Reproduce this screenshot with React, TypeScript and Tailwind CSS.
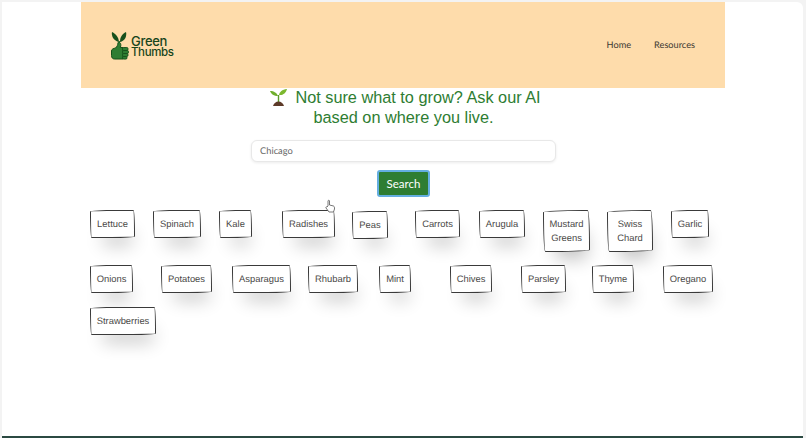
const ROW_ONE = [
  { label: 'Lettuce', size: 'w-[45px] h-[28px]' },
  { label: 'Spinach', size: 'w-[48px] h-[28px]' },
  { label: 'Kale', size: 'w-[33px] h-[28px]' },
  { label: 'Radishes', size: 'w-[53px] h-[28px]' },
  { label: 'Peas', size: 'w-[36px] h-[28px] mt-px' },
  { label: 'Carrots', size: 'w-[45px] h-[28px]' },
  { label: 'Arugula', size: 'w-[46px] h-[28px]' },
  { label: 'Mustard Greens', size: 'w-[47px] h-[42px]' },
  { label: 'Swiss Chard', size: 'w-[46px] h-[42px]' },
  { label: 'Garlic', size: 'w-[38px] h-[28px]' },
]

const ROW_TWO = [
  { label: 'Onions', size: 'w-[43px] h-[28px]' },
  { label: 'Potatoes', size: 'w-[51px] h-[28px]' },
  { label: 'Asparagus', size: 'w-[59px] h-[28px]' },
  { label: 'Rhubarb', size: 'w-[50px] h-[28px]' },
  { label: 'Mint', size: 'w-[32px] h-[28px]' },
  { label: 'Chives', size: 'w-[42px] h-[28px]' },
  { label: 'Parsley', size: 'w-[45px] h-[28px]' },
  { label: 'Thyme', size: 'w-[42px] h-[28px]' },
  { label: 'Oregano', size: 'w-[50px] h-[28px]' },
]

function Chip({ label, size }: { label: string; size: string }) {
  return (
    <div
      className={`${size} flex items-center justify-center rounded-[255px_15px_225px_15px/15px_225px_15px_255px] border-[1.5px] border-[#3a3a3a] bg-white px-[6px] text-center text-[9.4px] leading-[14px] text-[#4a4947] shadow-[5px_15px_18px_-8px_rgba(0,0,0,0.24)] [font-family:'Liberation_Sans',sans-serif] [text-rendering:geometricPrecision]`}
    >
      {label}
    </div>
  )
}

function Logo() {
  return (
    <div className="flex items-center gap-[2px]">
      <svg width="18" height="29" viewBox="0 0 18 29">
        {/* sprout */}
        <path d="M8 11C7.500 6 5 3 1 1 0 5 3 10 8 11Z" fill="#17501c" />
        <path d="M9 11C9 6 11 3 15 1 16 5 14 10 9 11Z" fill="#17501c" />
        <path d="M8 10h1v5H8z" fill="#2e7d32" />
        {/* thumb and fist */}
        <path d="M4.500 17C6 15.500 7 14 7 11.500 8.500 10.500 10 12 9.800 14.500L9.400 16.500H12V28H3.500C1.500 28 .5 26.500 .5 24.500V20C.5 18 2.500 17.500 4.500 17Z" fill="#2e7d32" stroke="#14501a" strokeWidth="1" />
        <rect x="11.500" y="16.500" width="5.500" height="3" rx="1.200" fill="#2e7d32" stroke="#14501a" strokeWidth="0.900" />
        <rect x="11.500" y="19.500" width="6" height="3" rx="1.200" fill="#2e7d32" stroke="#14501a" strokeWidth="0.900" />
        <rect x="11.500" y="22.500" width="5.500" height="3" rx="1.200" fill="#2e7d32" stroke="#14501a" strokeWidth="0.900" />
        <rect x="11.500" y="25.500" width="4.500" height="2.600" rx="1.200" fill="#2e7d32" stroke="#14501a" strokeWidth="0.900" />
      </svg>
      <div className="pt-[3px] font-medium text-[#17451b] [font-family:'Inter',sans-serif]">
        <div className="text-[13px] leading-[11px] tracking-[-0.3px]">Green</div>
        <div className="text-[11.500px] leading-[11px] tracking-[-0.4px]">Thumbs</div>
      </div>
    </div>
  )
}

function Seedling() {
  return (
    <svg width="17" height="17" viewBox="0 0 17 17">
      <path d="M8 7C7 4 4 2 0 2 1 5 4 7 8 7Z" fill="#6fae2c" />
      <path d="M9 6C9.500 3 12 .5 17 0 16 4 13 6.500 9 6Z" fill="#7cb82f" />
      <path d="M7.800 6h1.400v7H7.800z" fill="#5c9a2a" />
      <path d="M3 17C4 14 6 12.500 8.500 12.500S13 14 14 17Z" fill="#5d3a28" />
    </svg>
  )
}

export default function App() {
  return (
    <div className="h-[438px] w-[806px] overflow-hidden bg-[#f3f3f3] pl-[2px] pr-[3px] pt-[2px]">
      <div className="flex h-[436px] flex-col rounded-tr-[6px] bg-white">
        <header className="ml-[79px] mr-[78px] flex h-[86px] items-center justify-between bg-[#fedcab] pl-[30px] pr-[30px]">
          <Logo />
          <nav className="flex gap-[23px] text-[9.200px] text-[#3d3a33] [font-family:'Lato',sans-serif] [text-rendering:geometricPrecision]">
            <span>Home</span>
            <span>Resources</span>
          </nav>
        </header>

        <main className="relative flex-1 pl-[2px]">
          <h1 className="-mt-px text-center text-[16.300px] leading-[20px] text-[#2e7d32] [font-family:'Liberation_Sans',sans-serif]">
            <span className="flex items-center justify-center gap-[8px] pl-[4px]">
              <Seedling />
              <span>Not sure what to grow? Ask our AI</span>
            </span>
            <span className="block">based on where you live.</span>
          </h1>

          <div className="mx-auto mt-[13px] flex h-[22px] w-[305px] items-center rounded-[6px] border border-[#e8e8e8] bg-white pl-[8px] text-[9.300px] text-[#666] shadow-[0_1px_3px_rgba(0,0,0,0.08)] [font-family:'Lato',sans-serif] [text-rendering:geometricPrecision]">
            Chicago
          </div>

          <div className="mt-[8px] flex justify-center">
            <button className="h-[27px] w-[53px] rounded-[3px] border-2 border-[#64aee0] bg-[#2e7d32] text-[11.500px] text-white [font-family:'Lato',sans-serif]">
              Search
            </button>
          </div>

          <div className="ml-[86px] mt-[13px]">
            <div className="grid grid-cols-[63px_66px_63px_70px_63px_64px_64px_64px_64px_auto] items-start">
              {ROW_ONE.map((chip) => (
                <Chip key={chip.label} {...chip} />
              ))}
            </div>
            <div className="mt-[13px] grid grid-cols-[71px_71px_76px_71px_71px_71px_71px_71px_auto] items-start">
              {ROW_TWO.map((chip) => (
                <Chip key={chip.label} {...chip} />
              ))}
            </div>
            <div className="mt-[14px] flex">
              <Chip label="Strawberries" size="w-[66px] h-[28px]" />
            </div>
          </div>

          {/* mouse pointer caught in the screenshot */}
          <svg className="absolute left-[323px] top-[111px]" width="11" height="14" viewBox="0 0 11 14">
            <path d="M3 7V2c0-1 1.500-1 1.500 0v4l4 1c1 .5 1 1.500 1 3l-1 3H4L1 9c-.5-1 .5-1.500 1-1Z" fill="#fff" stroke="#555" strokeWidth="0.8" />
          </svg>
        </main>

        <div className="h-[2px] bg-[#2b4a42]" />
      </div>
    </div>
  )
}
